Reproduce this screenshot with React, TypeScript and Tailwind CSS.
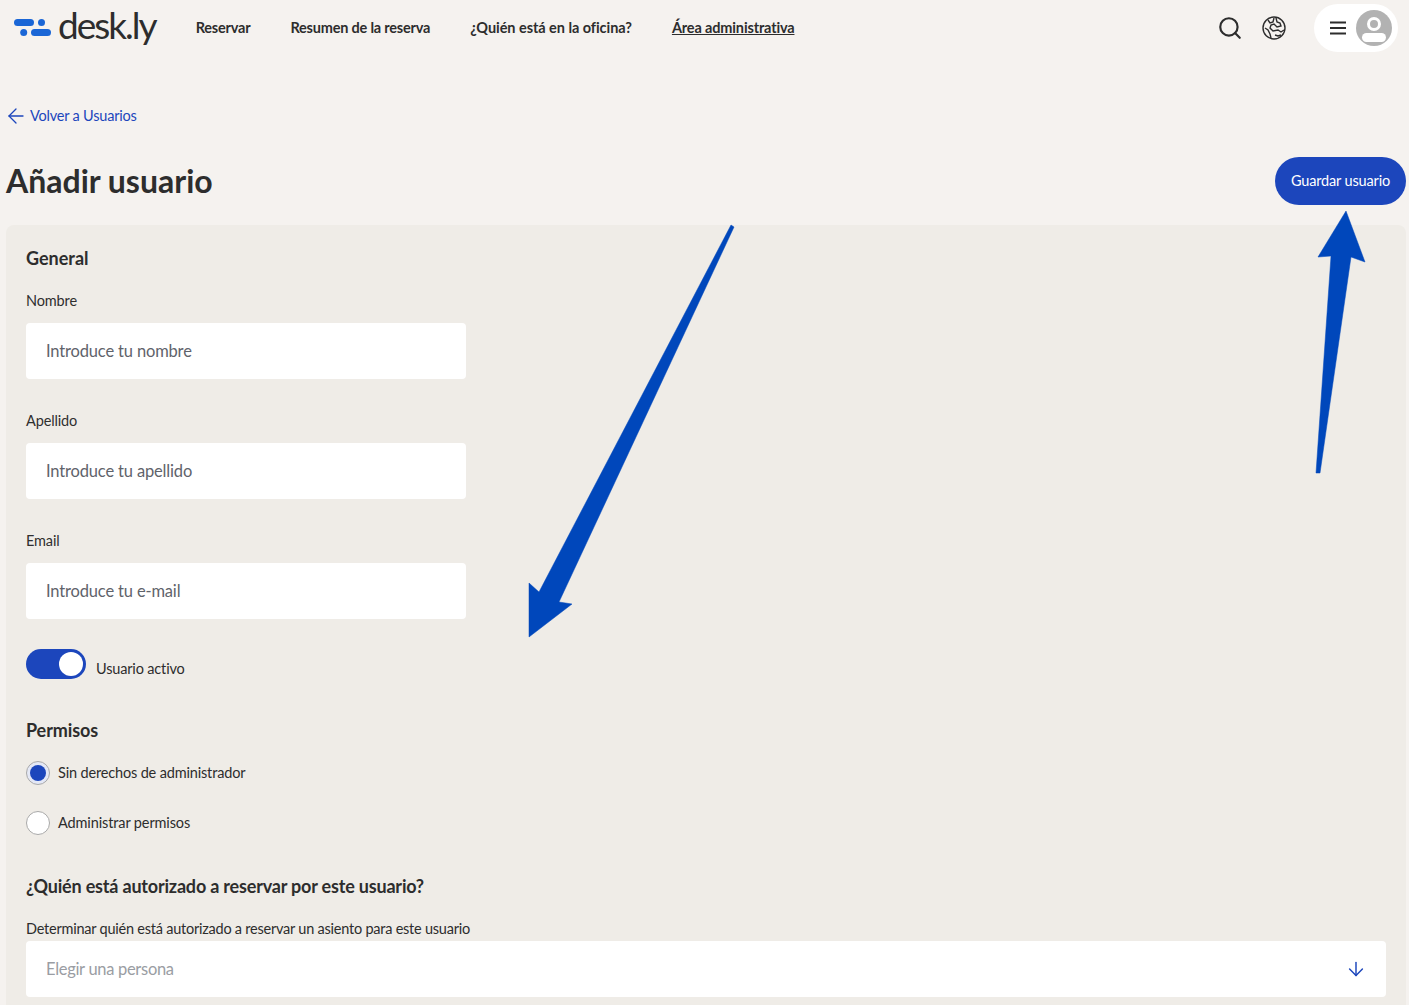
import { ArrowDown, ArrowLeft, Search } from "lucide-react";

const font = { fontFamily: "Lato, 'Noto Sans', sans-serif" };

function Field({ label, placeholder }: { label: string; placeholder: string }) {
  return (
    <div className="mb-[30px]">
      <label className="block h-[24px] text-[14.5px] tracking-[-0.14px] leading-[24px] text-[#2f2f2f] mb-[10px]">{label}</label>
      <div className="w-[440px] h-[56px] bg-white rounded-[4px] pl-[20px] flex items-center text-[16.5px] tracking-[-0.16px] text-[#5f636b]">
        {placeholder}
      </div>
    </div>
  );
}

function Logo() {
  return (
    <div className="flex items-center">
      <svg width="38" height="17" viewBox="0 0 38 17" className="mr-[6px] -mt-[1px]">
        <rect x="0" y="0" width="20" height="7" rx="3.5" fill="#1a66d6" />
        <circle cx="27.5" cy="3.5" r="3.5" fill="#1a66d6" />
        <circle cx="9.7" cy="13.5" r="3.5" fill="#1a66d6" />
        <rect x="17" y="10" width="20" height="7" rx="3.5" fill="#1a66d6" />
      </svg>
      <span className="text-[37px] leading-none text-[#2d2d2d] tracking-[-2px] -mt-[7px]">desk.ly</span>
    </div>
  );
}

function Globe() {
  return (
    <svg width="24" height="24" viewBox="0 0 24 24" fill="none" stroke="#2d2d2d" strokeWidth="1.4">
      <circle cx="12" cy="12" r="11" />
      <path d="M6 4l2 3 3-1 1-4M14 2l1 4 3 1 1 3-4 1-3-3-3 1-1 3 3 3 5-1 3 2 3-2M3 12l3 2 2 4 1 4M13 19l3 1 3-1" />
    </svg>
  );
}

function MenuLines() {
  return (
    <svg width="16" height="14" viewBox="0 0 16 14" className="mr-[10px]" fill="#2d2d2d">
      <rect x="0" y="0.5" width="16" height="2" />
      <rect x="0" y="6" width="16" height="2" />
      <rect x="0" y="11.5" width="16" height="2" />
    </svg>
  );
}

function Arrows() {
  return (
    <svg className="absolute left-0 top-0 pointer-events-none" width="1409" height="1005" viewBox="0 0 1409 1005">
      <polygon points="731,225 734,227 559,602 572,604 529,637 529,583 539,592" fill="#0047bb" stroke="#0047bb" strokeWidth="0.5" />
      <polygon points="1346,211 1365,262 1351,257 1320,473 1316,473 1331,256 1318,257" fill="#0047bb" stroke="#0047bb" strokeWidth="0.5" />
    </svg>
  );
}

export default function App() {
  return (
    <div style={font} className="relative h-[1005px] overflow-hidden bg-[#f5f2ef] text-[#2d2d2d]">
      <header className="h-[56px] flex items-center pl-[14px] pr-[11px]">
        <Logo />
        <nav className="flex items-center gap-[40px] ml-[40px] text-[14.5px] tracking-[-0.2px] font-bold text-[#2d2d2d]">
          <span>Reservar</span>
          <span>Resumen de la reserva</span>
          <span className="tracking-[-0.05px]">¿Quién está en la oficina?</span>
          <span className="underline tracking-[-0.15px]">Área administrativa</span>
        </nav>
        <div className="ml-auto flex items-center">
          <Search size={26} strokeWidth={2} className="mr-[19px]" />
          <Globe />
          <div className="ml-[28px] w-[84px] h-[48px] bg-white rounded-full flex items-center pl-[16px]">
            <MenuLines />
            <div className="relative w-[36px] h-[36px] rounded-full bg-[#b2b2b2] overflow-hidden">
              <div className="absolute left-[11px] top-[7px] w-[14px] h-[14px] rounded-full border-[3px] border-white bg-[#b2b2b2]" />
              <div className="absolute left-[6px] top-[23px] w-[24px] h-[9px] rounded-full bg-white" />
            </div>
          </div>
        </div>
      </header>

      <div className="mt-[48px] h-[24px] pl-[4px] flex items-center gap-[2px] text-[14.5px] tracking-[-0.2px] text-[#1c46bc]">
        <ArrowLeft size={24} strokeWidth={1.3} />
        <span>Volver a Usuarios</span>
      </div>

      <div className="mt-[29px] h-[48px] pl-[6px] pr-[3px] flex items-center justify-between">
        <h1 className="text-[32px] font-bold text-[#2d2d2d]">Añadir usuario</h1>
        <button className="w-[131px] h-[48px] rounded-full bg-[#1c46bc] text-white text-[14.5px] tracking-[-0.15px]">Guardar usuario</button>
      </div>

      <main className="mt-[20px] ml-[6px] mr-[3px] h-[800px] bg-[#efece7] rounded-t-[8px] px-[20px] pt-[19px]">
        <h2 className="text-[18px] leading-[28px] font-bold mb-[17px]">General</h2>
        <Field label="Nombre" placeholder="Introduce tu nombre" />
        <Field label="Apellido" placeholder="Introduce tu apellido" />
        <Field label="Email" placeholder="Introduce tu e-mail" />

        <div className="flex items-center gap-[10px] h-[30px]">
          <div className="w-[60px] h-[30px] rounded-full bg-[#1c46bc] flex items-center justify-end pr-[3px]">
            <div className="w-[24px] h-[24px] rounded-full bg-white" />
          </div>
          <span className="text-[14.5px] tracking-[-0.16px] mt-[10px]">Usuario activo</span>
        </div>

        <h2 className="mt-[37px] text-[18px] leading-[28px] font-bold tracking-[-0.1px]">Permisos</h2>
        <div className="mt-[17px] flex flex-col gap-[26px]">
          <div className="flex items-center gap-[8px] h-[24px]">
            <div className="w-[24px] h-[24px] rounded-full border border-[#a9a9a9] bg-[#e4e8f6] flex items-center justify-center">
              <div className="w-[16px] h-[16px] rounded-full bg-[#1c46bc]" />
            </div>
            <span className="text-[14.5px] tracking-[-0.16px]">Sin derechos de administrador</span>
          </div>
          <div className="flex items-center gap-[8px] h-[24px]">
            <div className="w-[24px] h-[24px] rounded-full border border-[#a9a9a9] bg-white" />
            <span className="text-[14.5px] tracking-[-0.12px]">Administrar permisos</span>
          </div>
        </div>

        <h2 className="mt-[37px] text-[18px] tracking-[-0.19px] leading-[28px] font-bold">¿Quién está autorizado a reservar por este usuario?</h2>
        <p className="mt-[19px] text-[14.5px] tracking-[-0.23px] leading-[20px]">Determinar quién está autorizado a reservar un asiento para este usuario</p>
        <div className="mt-[2px] h-[56px] bg-white rounded-[4px] pl-[20px] pr-[19px] flex items-center justify-between text-[16.5px] tracking-[-0.3px] text-[#9a9da3]">
          <span>Elegir una persona</span>
          <ArrowDown size={22} strokeWidth={1.6} className="text-[#1c46bc]" />
        </div>
      </main>

      <Arrows />
    </div>
  );
}
